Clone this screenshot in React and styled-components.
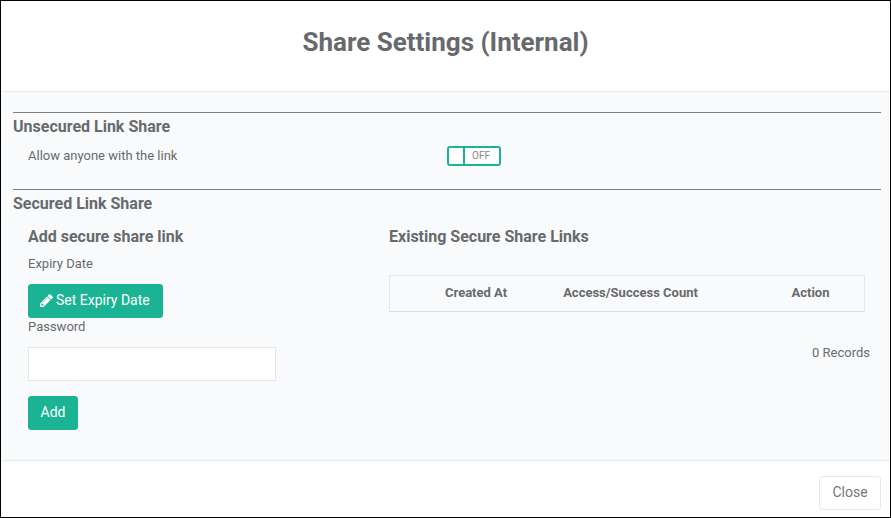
import React from "react";
import styled, { createGlobalStyle } from "styled-components";

const GlobalStyle = createGlobalStyle`
html, body {
    margin: 0;
    padding: 0;
    background: #fff;
}
* {
    box-sizing: border-box;
}
`

export default function App() {
    return (
        <Modal>
            <GlobalStyle />
            <Header>
                <Title>Share Settings (Internal)</Title>
            </Header>

            <Body>
                <Section>
                    <SectionTitle>Unsecured Link Share</SectionTitle>
                    <ToggleRow>
                        <Label>Allow anyone with the link</Label>
                        <Toggle>
                            <Knob />
                            <ToggleText>OFF</ToggleText>
                        </Toggle>
                    </ToggleRow>
                </Section>

                <SecuredSection>
                    <SectionTitle>Secured Link Share</SectionTitle>
                    <Columns>
                        <AddColumn>
                            <SubTitle>Add secure share link</SubTitle>
                            <Label>Expiry Date</Label>
                            <ExpiryButton>
                                <svg width="13" height="13" viewBox="0 0 1536 1536" fill="#fff">
                                    <path d="M363 1408l91-91-235-235-91 91v107h128v128h107zm523-928q0-22-22-22-10 0-17 7L305 1007q-7 7-7 17 0 22 22 22 10 0 17-7l542-542q7-7 7-17zm-54-192l416 416-832 832H0v-416zm683 96q0 53-37 90l-166 166-416-416 166-165q36-38 90-38 53 0 91 38l235 234q37 39 37 91z" />
                                </svg>
                                Set Expiry Date
                            </ExpiryButton>
                            <PasswordLabel>Password</PasswordLabel>
                            <PasswordInput type="password" />
                            <AddButton>Add</AddButton>
                        </AddColumn>

                        <LinksColumn>
                            <SubTitle>Existing Secure Share Links</SubTitle>
                            <LinksTable>
                                <thead>
                                    <tr>
                                        <HeadCell $width={55}></HeadCell>
                                        <HeadCell $width={59}>Created At</HeadCell>
                                        <HeadCell $width={253}>Access/Success Count</HeadCell>
                                        <HeadCell $width={107}>Action</HeadCell>
                                    </tr>
                                </thead>
                            </LinksTable>
                            <Records>0 Records</Records>
                        </LinksColumn>
                    </Columns>
                </SecuredSection>
            </Body>

            <Footer>
                <CloseButton>Close</CloseButton>
            </Footer>
        </Modal>
    )
}

const Modal = styled.div`
width: 891px;
height: 518px;
display: flex;
flex-direction: column;
border: 1px solid #000;
background-color: #fff;
font-family: Roboto, sans-serif;
color: #676a6c;
overflow: hidden;
`
const Header = styled.div`
height: 91px;
flex-shrink: 0;
display: flex;
align-items: center;
justify-content: center;
padding-bottom: 8px;
border-bottom: 1px solid #e7eaec;
`
const Title = styled.h4`
margin: 0;
font-size: 26px;
line-height: 30px;
font-weight: 700;
color: #676a6c;
`
const Body = styled.div`
flex: 1;
padding: 20px 9px 0 12px;
background-color: #f9fafc;
`
const Section = styled.div`
height: 77px;
border-top: 1px solid #7f7f7f;
`
const SecuredSection = styled(Section)`
height: auto;
`
const SectionTitle = styled.h5`
margin: 5px 0 0;
font-size: 16px;
line-height: 18px;
font-weight: 700;
color: #676a6c;
`
const ToggleRow = styled.div`
display: flex;
align-items: center;
margin-top: 10px;
padding-left: 15px;
`
const Label = styled.div`
width: 419px;
font-size: 13px;
line-height: 16px;
color: #676a6c;
`
const Toggle = styled.div`
width: 54px;
height: 20px;
display: flex;
background-color: #fff;
border: 2px solid #1ab394;
border-radius: 3px;
`
const Knob = styled.div`
width: 16px;
height: 100%;
border-right: 2px solid #1ab394;
`
const ToggleText = styled.span`
flex: 1;
padding-right: 2px;
text-align: center;
font-size: 10px;
line-height: 16px;
color: #888;
`
const Columns = styled.div`
display: flex;
margin-top: 14px;
padding-left: 15px;
`
const AddColumn = styled.div`
width: 361px;
flex-shrink: 0;
`
const LinksColumn = styled.div`
flex: 1;
`
const SubTitle = styled.h3`
margin: 0 0 9px;
font-size: 16px;
line-height: 20px;
font-weight: 700;
color: #676a6c;
`
const ExpiryButton = styled.button`
display: flex;
align-items: center;
gap: 3px;
width: 135px;
height: 34px;
margin-top: 12px;
padding: 0 11px 2px;
font-family: Roboto, sans-serif;
font-size: 14px;
white-space: nowrap;
color: #fff;
background-color: #1ab394;
border: 1px solid #1ab394;
border-radius: 3px;
`
const PasswordLabel = styled(Label)`
margin-top: 1px;
`
const PasswordInput = styled.input`
display: block;
width: 248px;
height: 34px;
margin-top: 12px;
background-color: #fff;
border: 1px solid #e5e6e7;
`
const AddButton = styled.button`
display: block;
width: 50px;
height: 34px;
margin-top: 15px;
padding: 0 0 2px;
font-family: Roboto, sans-serif;
font-size: 14px;
color: #fff;
background-color: #1ab394;
border: 1px solid #1ab394;
border-radius: 3px;
`
const LinksTable = styled.table`
width: 476px;
height: 37px;
margin-top: 28px;
table-layout: fixed;
border-collapse: separate;
border-spacing: 0;
border: 1px solid #e7e7e7;
border-bottom-color: #dfdfdf;
`
const HeadCell = styled.th`
width: ${props => `${props.$width}px`};
padding: 0 0 3px;
font-size: 13px;
font-weight: 700;
white-space: nowrap;
text-align: center;
color: #676a6c;
`
const Records = styled.div`
margin-top: 33px;
width: 481px;
text-align: right;
font-size: 13px;
line-height: 16px;
color: #676a6c;
`
const Footer = styled.div`
height: 57px;
flex-shrink: 0;
display: flex;
align-items: flex-start;
justify-content: flex-end;
padding: 15px 9px 0 0;
border-top: 1px solid #e7eaec;
`
const CloseButton = styled.button`
width: 62px;
height: 34px;
padding: 0 0 2px;
font-family: Roboto, sans-serif;
font-size: 14px;
color: #777;
background-color: #fff;
border: 1px solid #e7eaec;
border-radius: 3px;
`
